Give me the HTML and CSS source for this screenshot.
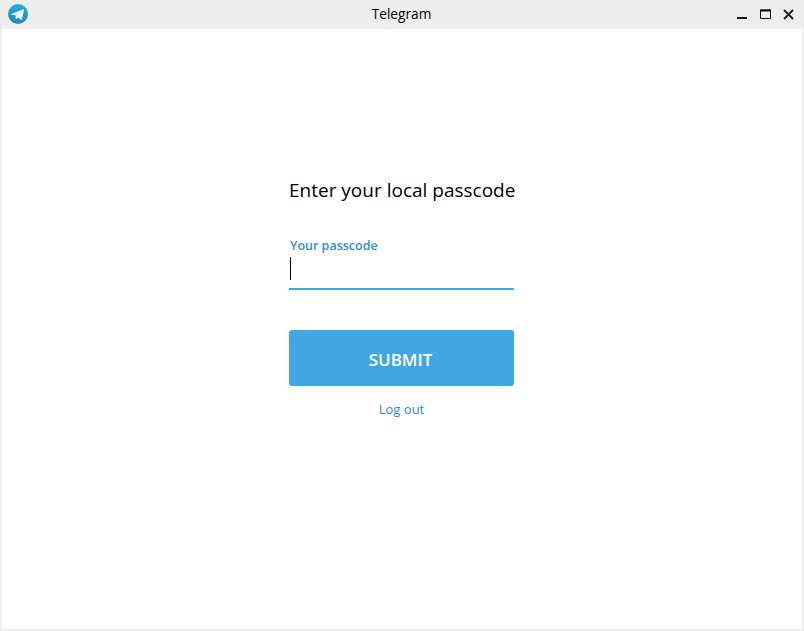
FILE: index.html
```html
<!DOCTYPE html>
<html lang="en">
<head>
<meta charset="utf-8">
<title>Telegram</title>
<link rel="stylesheet" href="styles.css">
</head>
<body>
<div class="window">
  <header class="titlebar">
    <svg class="logo" viewBox="0 0 20 20" width="20" height="20">
      <defs><linearGradient id="g" x1="0.5" y1="0" x2="0.5" y2="1"><stop offset="0" stop-color="#2ea6dc"/><stop offset="1" stop-color="#1a8cc2"/></linearGradient></defs>
      <circle cx="10" cy="10" r="10" fill="url(#g)"/>
      <path d="M3.6 9.9 15 5.4c.6-.2 1 .1.9.8l-1.900 9c-.1.6-.6.8-1.100.5l-3-2.200-1.500 1.400c-.3.3-.6.2-.7-.2L7.600 11 3.700 10.700c-.6-.2-.6-.6-.1-.8z" fill="#fff"/>
      <path d="M7.700 11 13.300 7.500 9.200 11.900 8.700 14.600z" fill="#d2e5f1"/>
    </svg>
    <span class="title">Telegram</span>
    <div class="controls">
      <svg viewBox="0 0 11 11" width="11" height="11"><rect x="0" y="8" width="10" height="2" fill="#111"/></svg>
      <svg viewBox="0 0 11 11" width="11" height="11"><path d="M.5 1h10v8.500H.5z" fill="none" stroke="#111"/><rect x="0" y="0.500" width="11" height="2" fill="#111"/></svg>
      <svg viewBox="0 0 11 11" width="11" height="11"><path d="M1 1l9 9M10 1l-9 9" fill="none" stroke="#222" stroke-width="2"/></svg>
    </div>
  </header>
  <main class="content">
    <section class="form">
      <h1 class="heading">Enter your local passcode</h1>
      <label class="label">Your passcode</label>
      <div class="field"><span class="caret"></span></div>
      <button class="submit">SUBMIT</button>
      <a class="logout">Log out</a>
    </section>
  </main>
</div>
</body>
</html>
```
FILE: styles.css
```css
* { box-sizing: border-box; }
html, body { margin: 0; height: 100%; }
body { font-family: "Open Sans", sans-serif; background: #fff; }
.window {
  width: 804px;
  height: 631px;
  display: flex;
  flex-direction: column;
  background: #eeeeee;
  padding: 0 2px 2px;
}
.titlebar {
  height: 29px;
  flex: none;
  position: relative;
  display: flex;
  align-items: center;
  justify-content: space-between;
  margin: 0 -2px;
  padding: 0 10px 0 8px;
}
.logo { display: block; margin-top: -1px; }
.title {
  position: absolute;
  left: 0;
  right: 1px;
  top: 5px;
  text-align: center;
  font-size: 13.7px;
  line-height: 18px;
  color: #000;
}
.controls { display: flex; gap: 12px; margin-top: -1px; }
.controls svg { display: block; }
.content {
  flex: 1;
  background: #fff;
  padding: 150px 0 0 287px;
}
.form { width: 227px; display: flex; flex-direction: column; }
.heading {
  margin: 0;
  font-size: 19px;
  font-weight: 400;
  line-height: 22px;
  color: #000;
  white-space: nowrap;
}
.label {
  margin: 37px 0 0 1px;
  font-size: 12.5px;
  font-weight: 600;
  line-height: 16px;
  color: #2b8fd2;
}
.field {
  height: 36px;
  width: 225px;
  border-bottom: 2px solid #40a7e3;
  padding: 3px 0 0 1px;
}
.caret { display: block; width: 1px; height: 23px; background: #000; }
.submit {
  width: 225px;
  height: 56px;
  margin-top: 40px;
  border: 0;
  border-radius: 3px;
  background: #40a7e3;
  color: #fff;
  font-family: inherit;
  font-size: 17px;
  font-weight: 600;
  padding: 2px 2px 0 0;
}
.logout {
  width: 225px;
  margin-top: 14px;
  text-align: center;
  font-size: 13px;
  line-height: 18px;
  color: #2f88c6;
}
```
